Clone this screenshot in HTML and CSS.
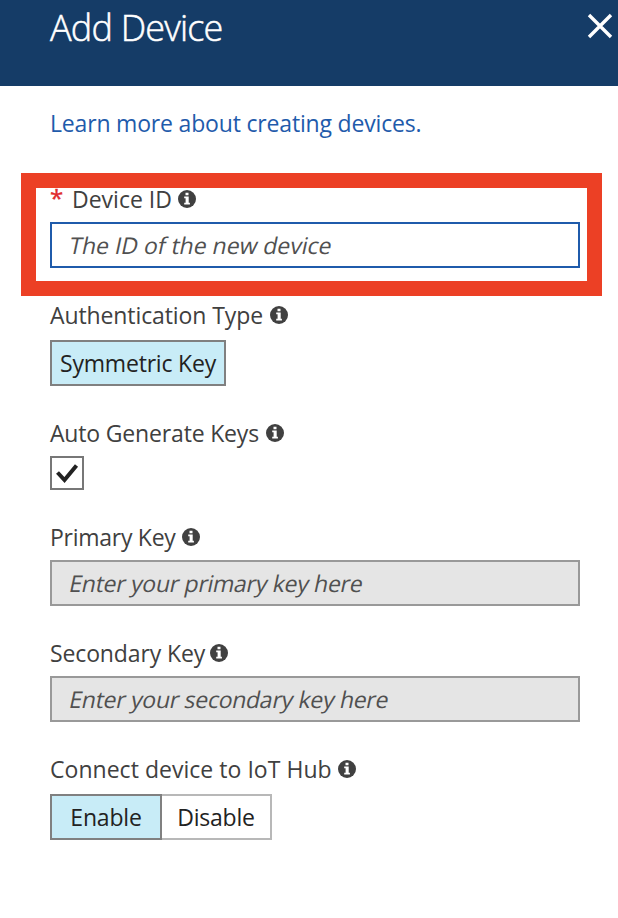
FILE: index.html
```html
<!DOCTYPE html>
<html lang="en">
<head>
<meta charset="utf-8">
<title>Add Device</title>
<link rel="stylesheet" href="styles.css">
</head>
<body>
<svg class="sprite" aria-hidden="true">
  <symbol id="info" viewBox="0 0 18 18">
    <circle cx="9" cy="9" r="9" fill="#404040"/>
    <path d="M7.5 2.8h3v2.4h-3zM6.2 6.6h4.5v6.2h1.2v1.6H6.2v-1.6h1.4V8.2H6.2z" fill="#fff"/>
  </symbol>
</svg>
<header class="header">
  <h1 class="title">Add Device</h1>
  <svg class="close" viewBox="0 0 26 26"><path d="M2 2l22 22M24 2L2 24"/></svg>
</header>
<main class="form">
  <a class="link">Learn more about creating devices.</a>
  <section class="field field-id">
    <div class="label"><span class="star">*</span><span class="t-device">Device ID</span><svg class="info"><use href="#info"/></svg></div>
    <div class="input active"><span class="hint h-id">The ID of the new device</span></div>
  </section>
  <section class="field">
    <div class="label tall"><span class="t-auth">Authentication Type</span><svg class="info"><use href="#info"/></svg></div>
    <div class="options"><button class="option selected single">Symmetric Key</button></div>
  </section>
  <section class="field">
    <div class="label"><span class="t-auto">Auto Generate Keys</span><svg class="info"><use href="#info"/></svg></div>
    <div class="checkbox"><svg viewBox="0 0 30 30"><path d="M5.5 14.5l7 7.5L24.5 7.5"/></svg></div>
  </section>
  <section class="field">
    <div class="label"><span class="t-primary">Primary Key</span><svg class="info"><use href="#info"/></svg></div>
    <div class="input disabled"><span class="hint">Enter your primary key here</span></div>
  </section>
  <section class="field">
    <div class="label"><span class="t-secondary">Secondary Key</span><svg class="info"><use href="#info"/></svg></div>
    <div class="input disabled"><span class="hint">Enter your secondary key here</span></div>
  </section>
  <section class="field">
    <div class="label tall"><span class="t-connect">Connect device to IoT Hub</span><svg class="info"><use href="#info"/></svg></div>
    <div class="options"><button class="option selected enable">Enable</button><button class="option disable">Disable</button></div>
  </section>
</main>
</body>
</html>
```
FILE: styles.css
```css
* { box-sizing: border-box; }
body {
  margin: 0;
  height: 918px;
  overflow: hidden;
  background: #fff;
  color: #404040;
  font: 23px/32px "Open Sans", "Noto Sans", sans-serif;
  white-space: nowrap;
}
.sprite { display: none; }
.header {
  display: flex;
  justify-content: space-between;
  height: 86px;
  padding: 0 5px 0 50px;
  background: #153c67;
}
.title {
  margin: 3px 0 0;
  color: #fff;
  font-size: 36px;
  font-weight: 300;
  line-height: 50px;
  letter-spacing: -0.8px;
  -webkit-text-stroke: 0.5px #fff;
}
.close {
  width: 26px;
  height: 26px;
  margin-top: 13px;
  fill: none;
  stroke: #fff;
  stroke-width: 3.4;
}
.form { padding: 21px 38px 0 50px; }
.link {
  display: block;
  height: 76px;
  color: #1f5bab;
  letter-spacing: -0.18px;
}
.field { margin-bottom: 31px; }
.field-id { position: relative; }
.field-id::after {
  content: "";
  position: absolute;
  inset: -10px -22px -28px -29px;
  border: 15px solid #ec4025;
}
.label {
  display: flex;
  height: 39px;
}
.label.tall { height: 41px; }
.info {
  width: 18px;
  height: 18px;
  margin: 7px 0 0 7px;
}
.t-device { margin-right: -1px; }
.t-auth { letter-spacing: -0.1px; }
.t-auto { letter-spacing: -0.17px; }
.t-primary { letter-spacing: -0.27px; margin-right: -1px; }
.t-secondary { letter-spacing: -0.13px; margin-right: -2px; }
.t-connect { letter-spacing: 0.03px; margin-right: -1px; }
.star {
  width: 22px;
  color: #e02b2b;
  font-size: 24px;
  line-height: 29px;
  -webkit-text-stroke: 0.4px #e02b2b;
}
.input {
  height: 46px;
  padding: 5px 18px;
  border: 2px solid #999;
}
.active { border-color: #1f5bab; }
.disabled { background: #e5e5e5; }
.hint {
  display: inline-block;
  color: #505050;
  letter-spacing: -0.27px;
  transform: skewX(-12deg);
}
.h-id { letter-spacing: -0.02px; }
.options { display: flex; }
.option {
  height: 46px;
  padding: 0;
  border: 2px solid #808080;
  background: #fff;
  color: #222;
  font: inherit;
  letter-spacing: -0.2px;
}
.selected { background: #c8ecf7; }
.single { width: 176px; }
.enable { width: 112px; }
.disable {
  width: 110px;
  border-color: #b8b8b8;
  border-left: 0;
}
.checkbox {
  width: 34px;
  height: 34px;
  border: 2px solid #777;
}
.checkbox svg {
  display: block;
  fill: none;
  stroke: #222;
  stroke-width: 4;
}
```
